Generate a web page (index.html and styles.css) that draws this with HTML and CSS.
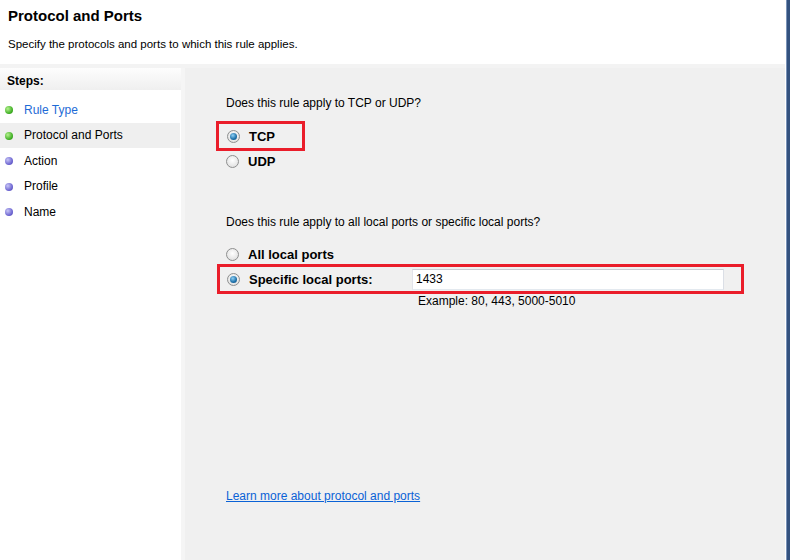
FILE: index.html
```html
<!DOCTYPE html>
<html lang="en">
<head>
    <meta charset="UTF-8">
    <title>Protocol and Ports</title>
    <link rel="stylesheet" href="styles.css">
</head>
<body>
<div class="window">
    <div class="frame">
        <div class="header">
            <h1>Protocol and Ports</h1>
            <p>Specify the protocols and ports to which this rule applies.</p>
        </div>
        <div class="content">
            <div class="steps">
                <div class="steps-title">Steps:</div>
                <ul>
                    <li class="done link"><span class="dot green"></span>Rule Type</li>
                    <li class="done current"><span class="dot green"></span>Protocol and Ports</li>
                    <li><span class="dot blue"></span>Action</li>
                    <li><span class="dot blue"></span>Profile</li>
                    <li><span class="dot blue"></span>Name</li>
                </ul>
            </div>
            <div class="gutter"></div>
            <div class="main">
                <p class="question">Does this rule apply to TCP or UDP?</p>
                <div class="highlight tcp">
                    <label class="option"><span class="radio checked"></span>TCP</label>
                </div>
                <label class="option udp"><span class="radio"></span>UDP</label>

                <p class="question second">Does this rule apply to all local ports or specific local ports?</p>
                <label class="option all"><span class="radio"></span>All local ports</label>
                <div class="highlight ports">
                    <label class="option specific"><span class="radio checked"></span>Specific local ports:</label>
                    <div class="textbox">1433</div>
                </div>
                <p class="example">Example: 80, 443, 5000-5010</p>

                <a class="more" href="#">Learn more about protocol and ports</a>
            </div>
        </div>
    </div>
    <div class="edge"></div>
</div>
</body>
</html>
```

FILE: styles.css
```css
*{
    margin: 0;
    padding: 0;
    box-sizing: border-box;
}
body{
    width: 790px;
    height: 560px;
    overflow: hidden;
    font-family: "Liberation Sans", Arial, sans-serif;
    font-size: 12px;
    color: #000;
    background: #fff;
}
.window{
    display: flex;
    height: 560px;
}
.frame{
    flex: 1;
    display: flex;
    flex-direction: column;
    border-right: 1px solid #fff;
}
.edge{
    width: 4px;
    background: #34527f;
    border-left: 1px solid #7a93b8;
}

/* header */
.header{
    height: 64px;
    background: #fff;
    padding: 6px 0 0 8px;
}
.header h1{
    font-size: 15px;
    font-weight: bold;
    line-height: 19px;
}
.header p{
    margin-top: 12px;
    font-size: 11.5px;
    line-height: 14px;
}

.content{
    flex: 1;
    display: flex;
    border-top: 4px solid #f3f3f3;
}

/* steps */
.steps{
    width: 181px;
    background: #fff;
}
.steps-title{
    height: 22px;
    padding: 6px 0 0 7px;
    font-weight: bold;
    background: linear-gradient(#fdfdfd, #efefef);
}
.steps ul{
    list-style: none;
    padding-top: 7px;
}
.steps li{
    height: 25.5px;
    display: flex;
    align-items: center;
    padding-left: 24px;
    position: relative;
}
.steps li.current{
    background: #efefef;
    width: 180px;
}
.steps li.link{
    color: #1e6bd6;
}
.dot{
    position: absolute;
    left: 5px;
    top: 9px;
    width: 8px;
    height: 8px;
    border-radius: 50%;
}
.dot.green{
    background: radial-gradient(circle at 35% 35%, #b5f28f, #3fae24 65%, #2a8a16);
}
.dot.blue{
    background: radial-gradient(circle at 35% 35%, #c8c6f6, #6b63d0 65%, #4a43a8);
}

.gutter{
    width: 4px;
    background: #f5f5f5;
}

/* main */
.main{
    flex: 1;
    background: #f0f0f0;
    padding: 28px 0 0 41px;
    display: flex;
    flex-direction: column;
    align-items: flex-start;
}
.question{
    line-height: 14px;
}
.question.second{
    margin-top: 44px;
}
.option{
    display: flex;
    align-items: center;
    font-weight: bold;
    font-size: 13px;
    height: 20px;
}
.radio{
    width: 13px;
    height: 13px;
    border-radius: 50%;
    border: 1px solid #8e8f8f;
    background: radial-gradient(circle at 50% 40%, #fff, #d9d9d9);
    margin-right: 9px;
    position: relative;
}
.radio.checked::after{
    content: "";
    position: absolute;
    left: 2px;
    top: 2px;
    width: 7px;
    height: 7px;
    border-radius: 50%;
    background: radial-gradient(circle at 40% 35%, #8fd0f5, #1c6fa8 60%, #0e4a78);
}
.highlight{
    border: 3px solid #ea1d2a;
}
.tcp{
    margin: 11px 0 0 -10px;
    padding: 2px 27px 2px 8px;
}
.all{
    margin-top: 15px;
}
.ports{
    margin-left: -9px;
    width: 527px;
    height: 30px;
    display: flex;
    align-items: center;
    padding-left: 7px;
}
.specific{
    width: 185px;
}
.textbox{
    width: 312px;
    height: 21px;
    background: #fff;
    border: 1px solid #c9cbd3;
    border-left-color: #e2e3ea;
    border-right-color: #dbdfe6;
    border-bottom-color: #e3e9ef;
    padding: 2px 0 0 3px;
    font-size: 12px;
}
.example{
    margin-left: 192px;
    line-height: 14px;
}
.more{
    margin-top: 181px;
    color: #0a62d6;
    text-decoration: underline;
}
```
